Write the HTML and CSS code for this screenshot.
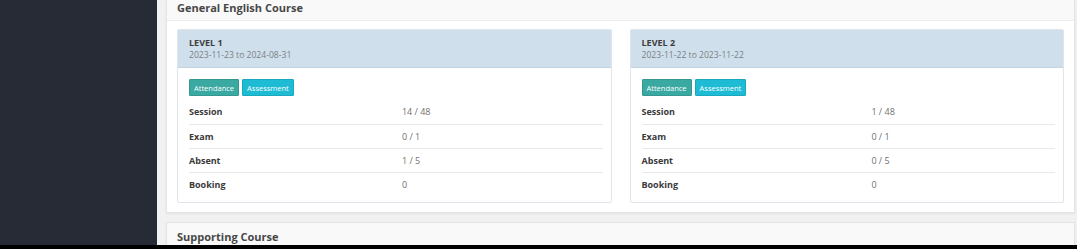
FILE: index.html
```html
<!DOCTYPE html>
<html lang="en">
<head>
  <meta charset="UTF-8" />
  <title>Courses</title>
  <link rel="stylesheet" href="styles.css">
</head>
<body>
  <div class="page">
    <aside class="sidebar"></aside>

    <main class="content">
      <section class="box">
        <div class="box-header">
          <h3>General English Course</h3>
        </div>
        <div class="box-body levels">
          <div class="panel">
            <div class="panel-heading">
              <div class="level-name">LEVEL 1</div>
              <div class="level-dates">2023-11-23 to 2024-08-31</div>
            </div>
            <div class="panel-body">
              <div class="actions">
                <button class="btn btn-teal">Attendance</button>
                <button class="btn btn-cyan">Assessment</button>
              </div>
              <table class="stats stats-narrow">
                <tr><th>Session</th><td>14 / 48</td></tr>
                <tr><th>Exam</th><td>0 / 1</td></tr>
                <tr><th>Absent</th><td>1 / 5</td></tr>
                <tr><th>Booking</th><td>0</td></tr>
              </table>
            </div>
          </div>

          <div class="panel">
            <div class="panel-heading">
              <div class="level-name">LEVEL 2</div>
              <div class="level-dates">2023-11-22 to 2023-11-22</div>
            </div>
            <div class="panel-body">
              <div class="actions">
                <button class="btn btn-teal">Attendance</button>
                <button class="btn btn-cyan">Assessment</button>
              </div>
              <table class="stats stats-wide">
                <tr><th>Session</th><td>1 / 48</td></tr>
                <tr><th>Exam</th><td>0 / 1</td></tr>
                <tr><th>Absent</th><td>0 / 5</td></tr>
                <tr><th>Booking</th><td>0</td></tr>
              </table>
            </div>
          </div>
        </div>
      </section>

      <section class="box">
        <div class="box-header boxed">
          <h3>Supporting Course</h3>
        </div>
      </section>
    </main>
  </div>
  <div class="bottom-bar"></div>
</body>
</html>
```

FILE: styles.css
```css
* {
  box-sizing: border-box;
  margin: 0;
  padding: 0;
}

body {
  font-family: 'Open Sans', sans-serif;
  font-size: 9px;
  color: #333;
  background: #000;
  overflow: hidden;
}

.page {
  display: flex;
  height: 245px;
  overflow: hidden;
}

.sidebar {
  width: 157px;
  flex-shrink: 0;
  background-color: #272b35;
}

.content {
  flex: 1;
  background-color: #f1f1f1;
  padding: 0 2px 0 9px;
  display: flex;
  flex-direction: column;
  gap: 9px;
}

.box {
  background: #fff;
  border: 1px solid #e4e4e4;
  border-top: none;
  box-shadow: 0 1px 2px rgba(0, 0, 0, 0.06);
}

.box-header {
  padding: 0 10px 4px;
  border-bottom: 1px solid #ececec;
  background: #f9f9f9;
}

.box-header.boxed {
  border-top: 1px solid #e4e4e4;
  padding: 6px 10px 10px;
}

.box-header h3 {
  font-size: 11px;
  line-height: 16px;
  font-weight: 700;
  color: #474747;
}

.box-body {
  padding: 8px 10px 9px;
}

.levels {
  display: grid;
  grid-template-columns: 1fr 1fr;
  gap: 18px;
}

.panel {
  border: 1px solid #dfe5ea;
  border-radius: 2px;
  background: #fff;
}

.panel-heading {
  background-color: #cfdfec;
  border-bottom: 1px solid #c3d3e0;
  padding: 7px 11px 6px;
  line-height: 12px;
}

.level-name {
  font-weight: 700;
  color: #3d3d3d;
}

.level-dates {
  font-size: 8.6px;
  color: #7a7f86;
}

.panel-body {
  padding: 11px 8px 6px 11px;
}

.actions {
  display: flex;
  gap: 3px;
  margin-bottom: 4px;
}

.btn {
  font-family: 'Open Sans', sans-serif;
  font-size: 7.5px;
  height: 17px;
  padding: 0 4px;
  border: 1px solid transparent;
  border-radius: 1px;
  color: #fff;
}

.btn-teal {
  background-color: #39a9a2;
  border-color: #33988f;
}

.btn-cyan {
  background-color: #1ebcd4;
  border-color: #1aa8be;
}

.stats {
  width: 100%;
  border-collapse: collapse;
}

.stats-narrow th {
  width: 51.5%;
}

.stats-wide th {
  width: 55.6%;
}

.stats th,
.stats td {
  height: 24px;
  padding: 0;
  text-align: left;
  vertical-align: middle;
}

.stats tr + tr th,
.stats tr + tr td {
  border-top: 1px solid #e9e9e9;
}

.stats th {
  font-weight: 700;
  color: #3a3a3a;
}

.stats td {
  color: #707070;
}

.bottom-bar {
  height: 4px;
  background: #000;
}
```
